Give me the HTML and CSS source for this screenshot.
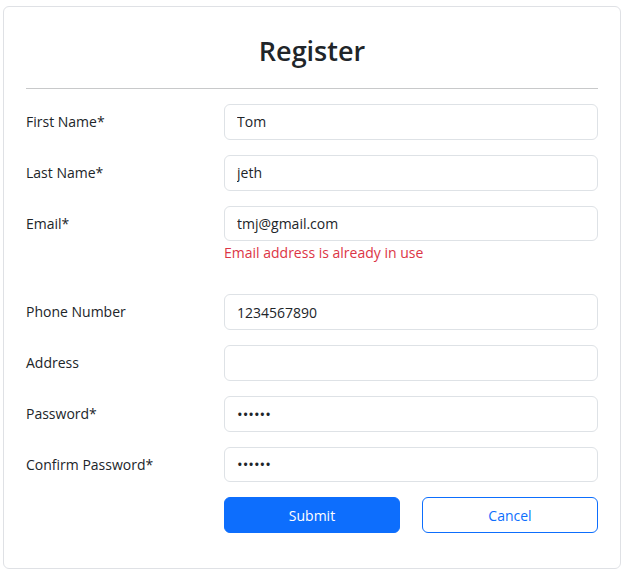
FILE: index.html
```html
<!DOCTYPE html>
<html lang="en">
<head>
<meta charset="utf-8">
<title>Register</title>
<link rel="stylesheet" href="styles.css">
</head>
<body>
<div class="card">
  <h2 class="title">Register</h2>
  <hr class="divider">
  <form class="form">
    <div class="row">
      <label class="label">First Name*</label>
      <div class="field"><input class="input" type="text" value="Tom"></div>
    </div>
    <div class="row">
      <label class="label">Last Name*</label>
      <div class="field"><input class="input" type="text" value="jeth"></div>
    </div>
    <div class="row row-error">
      <label class="label">Email*</label>
      <div class="field">
        <input class="input" type="text" value="tmj@gmail.com">
        <div class="feedback">Email address is already in use</div>
      </div>
    </div>
    <div class="row">
      <label class="label">Phone Number</label>
      <div class="field"><input class="input" type="text" value="1234567890"></div>
    </div>
    <div class="row">
      <label class="label">Address</label>
      <div class="field"><input class="input" type="text" value=""></div>
    </div>
    <div class="row">
      <label class="label">Password*</label>
      <div class="field"><input class="input" type="password" value="secret"></div>
    </div>
    <div class="row">
      <label class="label">Confirm Password*</label>
      <div class="field"><input class="input" type="password" value="secret"></div>
    </div>
    <div class="row">
      <div></div>
      <div class="actions">
        <button type="button" class="btn btn-primary">Submit</button>
        <button type="button" class="btn btn-outline">Cancel</button>
      </div>
    </div>
  </form>
</div>
</body>
</html>
```

FILE: styles.css
```css
* { box-sizing: border-box; }
html, body { margin: 0; padding: 0; background: #fff; }
body {
  font-family: "Open Sans", "Noto Sans", sans-serif;
  font-size: 14px;
  color: #212529;
}
.card {
  margin: 6px 2px 0 3px;
  height: 563px;
  border: 1px solid #dfe1e5;
  border-radius: 6px;
  padding: 0 22px;
}
.title {
  margin: 0;
  padding-top: 24px;
  font-size: 27px;
  line-height: 40px;
  font-weight: 600;
  text-align: center;
  color: #212529;
}
.divider {
  margin: 17px 0 15px 0;
  border: 0;
  border-top: 1px solid #c8c9ca;
  height: 0;
}
.form { display: flex; flex-direction: column; gap: 15px; }
.row {
  display: grid;
  grid-template-columns: 198px 1fr;
  align-items: start;
}
.label {
  padding-top: 7px;
  line-height: 22px;
  font-size: 14px;
}
.input {
  display: block;
  width: 100%;
  height: 35.75px;
  padding: 0 12px;
  font-family: inherit;
  font-size: 14px;
  color: #212529;
  border: 1px solid #dee2e6;
  border-radius: 6px;
  background: #fff;
  outline: none;
}
.input[type="password"] { font-size: 15px; letter-spacing: 0; }
.feedback {
  margin-top: 1px;
  line-height: 22px;
  font-size: 14px;
  color: #dc3545;
  margin-bottom: 15px;
}
.actions {
  display: grid;
  grid-template-columns: 1fr 1fr;
  gap: 22px;
}
.btn {
  height: 35.75px;
  font-family: inherit;
  font-size: 14px;
  border-radius: 6px;
  cursor: pointer;
}
.btn-primary {
  background: #0d6efd;
  border: 1px solid #0d6efd;
  color: #fff;
}
.btn-outline {
  background: #fff;
  border: 1px solid #0d6efd;
  color: #0d6efd;
}
```
